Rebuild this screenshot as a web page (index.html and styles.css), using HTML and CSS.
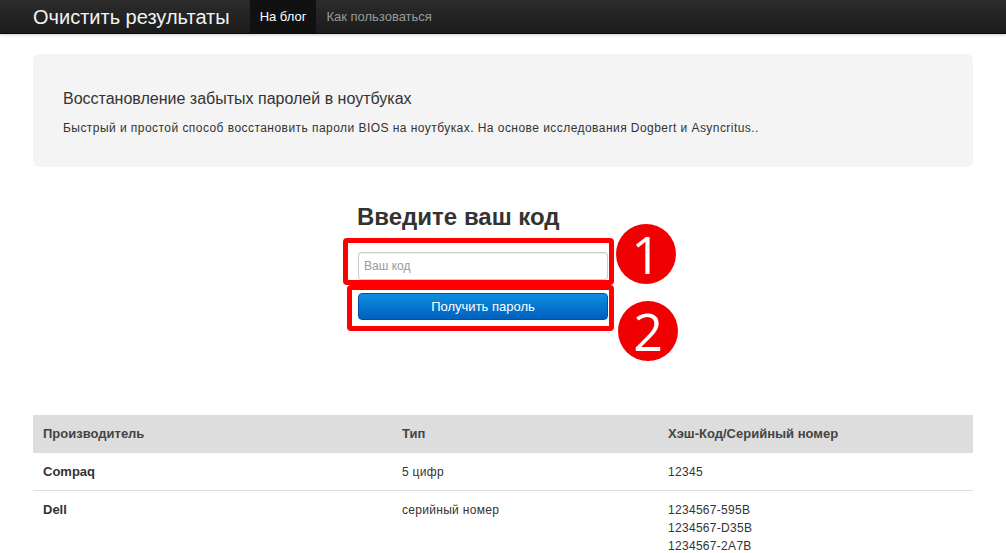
FILE: index.html
```html
<!DOCTYPE html>
<html lang="ru">
<head>
<meta charset="utf-8">
<title>Очистить результаты</title>
<link rel="stylesheet" href="styles.css">
</head>
<body>
<header class="navbar">
  <div class="nav-inner">
    <a class="brand" href="#">Очистить результаты</a>
    <ul class="nav">
      <li class="active"><a href="#">На блог</a></li>
      <li><a href="#">Как пользоваться</a></li>
    </ul>
  </div>
</header>
<main class="container">
  <section class="hero">
    <h3 class="hero-title">Восстановление забытых паролей в ноутбуках</h3>
    <p class="hero-text">Быстрый и простой способ восстановить пароли BIOS на ноутбуках. На основе исследования Dogbert и Asyncritus..</p>
  </section>

  <section class="form">
    <h2 class="form-title">Введите ваш код</h2>
    <div class="fields">
      <input class="code-input" type="text" placeholder="Ваш код">
      <button class="btn-primary" type="button">Получить пароль</button>
      <div class="mark box1"></div>
      <div class="mark box2"></div>
      <div class="num num1">1</div>
      <div class="num num2">2</div>
    </div>
  </section>

  <table class="table">
    <thead>
      <tr><th class="c1">Производитель</th><th class="c2">Тип</th><th class="c3">Хэш-Код/Серийный номер</th></tr>
    </thead>
    <tbody>
      <tr><td class="vendor">Compaq</td><td>5 цифр</td><td>12345</td></tr>
      <tr><td class="vendor">Dell</td><td>серийный номер</td><td>1234567-595B<br>1234567-D35B<br>1234567-2A7B</td></tr>
    </tbody>
  </table>
</main>
</body>
</html>
```

FILE: styles.css
```css
* { box-sizing: border-box; }
html, body { margin: 0; padding: 0; background: #fff; }
body {
  font-family: "Liberation Sans", Arial, sans-serif;
  font-size: 12px;
  color: #333;
  overflow: hidden;
}

.navbar {
  height: 34px;
  background: linear-gradient(#2c2c2c, #1b1b1b);
  border-bottom: 1px solid #0a0a0a;
  box-shadow: 0 1px 3px rgba(0,0,0,0.2);
}
.nav-inner {
  width: 940px;
  margin: 0 auto;
  display: flex;
  align-items: stretch;
  height: 33px;
}
.brand {
  color: #f2f2f2;
  text-decoration: none;
  font-size: 20px;
  line-height: 26px;
  padding: 0 20px 0 0;
  display: flex;
  align-items: center;
}
.nav {
  list-style: none;
  margin: 0;
  padding: 0;
  display: flex;
}
.nav li { display: flex; }
.nav a {
  display: flex;
  align-items: center;
  padding: 0 10px;
  font-size: 13px;
  color: #9a9a9a;
  text-decoration: none;
}
.nav li.active a {
  background: #111;
  color: #fff;
}

.container {
  width: 940px;
  margin: 0 auto;
}

.hero {
  margin-top: 20px;
  background: #f4f4f4;
  border-radius: 6px;
  height: 113px;
  padding: 35px 30px 0;
}
.hero-title {
  margin: 0;
  font-size: 16px;
  font-weight: normal;
  line-height: 20px;
  color: #333;
}
.hero-text {
  margin: 10px 0 0;
  font-size: 12px;
  line-height: 18px;
  color: #333;
  letter-spacing: 0.45px;
}

.form {
  margin: 36px 0 0 325px;
  width: 250px;
}
.form-title {
  margin: 0 0 0 -1px;
  font-size: 24px;
  line-height: 28px;
  font-weight: bold;
  color: #333;
  white-space: nowrap;
}
.fields {
  position: relative;
  margin-top: 21px;
  display: flex;
  flex-direction: column;
  gap: 13px;
}
.code-input {
  width: 250px;
  height: 28px;
  border: 1px solid #ccc;
  border-radius: 3px;
  padding: 4px 5px;
  font-family: "Liberation Sans", Arial, sans-serif;
  font-size: 12px;
  color: #555;
  box-shadow: inset 0 1px 1px rgba(0,0,0,0.075);
  outline: none;
}
.code-input::placeholder { color: #999; }
.btn-primary {
  width: 250px;
  height: 27px;
  border: 1px solid #0050a8;
  border-radius: 4px;
  background: linear-gradient(#0d8fe2, #005fbd);
  color: #fff;
  font-family: "Liberation Sans", Arial, sans-serif;
  font-size: 13px;
  padding: 0;
}

.mark {
  position: absolute;
  border: 5px solid #ff0000;
  border-radius: 4px;
}
.box1 { left: -15px; top: -14px; width: 271px; height: 47px; }
.box2 { left: -11px; top: 33px; width: 267px; height: 46px; }
.num {
  position: absolute;
  width: 60px;
  height: 60px;
  border-radius: 50%;
  background: #f00000;
  color: #fff;
  font-family: "Open Sans", "DejaVu Sans", sans-serif;
  font-size: 52px;
  line-height: 60px;
  text-align: center;
}
.num1 { left: 258px; top: -28px; }
.num2 { left: 260px; top: 49px; }

.table {
  margin-top: 95px;
  width: 940px;
  border-collapse: collapse;
}
.table th, .table td {
  text-align: left;
  vertical-align: top;
  padding: 10px 10px 9px;
  line-height: 18px;
  font-size: 12px;
  letter-spacing: 0.3px;
}
.table th {
  background: #dddddd;
  font-weight: bold;
  font-size: 13px;
  letter-spacing: 0;
  color: #444;
  padding-bottom: 10px;
}
.table td { color: #333; }
.table tbody tr + tr td { border-top: 1px solid #ddd; }
.table td.vendor { font-weight: bold; font-size: 13px; letter-spacing: 0; }
.c1 { width: 359px; }
.c2 { width: 266px; }
.c3 { width: 315px; }
```
